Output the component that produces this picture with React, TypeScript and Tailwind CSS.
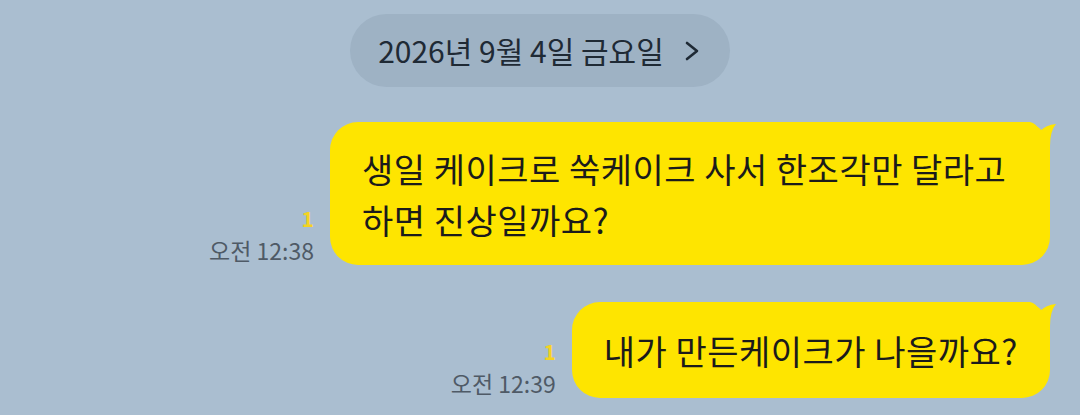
import React from "react"

const FONT = { fontFamily: '"Noto Sans CJK KR", "Noto Sans", sans-serif' }

function Tail() {
  return (
    <svg
      className="absolute right-0 top-0"
      width="36"
      height="32"
      viewBox="0 0 36 32"
      aria-hidden
    >
      <path d="M0 0 L8 0 Q14 1 18 9 Q24 3 34 2 Q28 9 28 24 L28 32 L0 32 Z" fill="#fee500" />
    </svg>
  )
}

interface MessageProps {
  text: string
  time: string
  bubbleClass: string
}

function Message({ text, time, bubbleClass }: MessageProps) {
  return (
    <div className="flex justify-end items-end gap-[16px] pr-[22px]">
      <div className="flex flex-col items-end pb-[1px]">
        <span className="text-[21px] leading-[24px] font-bold text-[#f4d321] mb-[6px]">1</span>
        <span className="text-[23px] leading-[28px] text-[#4f5a66] whitespace-nowrap">{time}</span>
      </div>
      <div className="relative pr-[8px]">
        <div
          className={`bg-[#fee500] rounded-[28px] px-[32px] text-[34px] tracking-[0.5px] leading-[51px] text-[#1b1b1b] break-keep ${bubbleClass}`}
        >
          {text}
        </div>
        <Tail />
      </div>
    </div>
  )
}

export default function App() {
  return (
    <div className="w-[1080px] h-[415px] overflow-hidden bg-[#aabed0] pt-[14px] flex flex-col" style={FONT}>
      <div className="flex justify-center">
        <div className="h-[73px] rounded-full bg-[#9eb2c4] pl-[28px] pr-[30px] flex items-center gap-[20px]">
          <span className="text-[30px] text-[#1f2a35] whitespace-nowrap">2026년 9월 4일 금요일</span>
          <svg width="16" height="20" viewBox="0 0 16 20" aria-hidden>
            <path d="M3 2 L13 10 L3 18" fill="none" stroke="#1f2a35" strokeWidth="2.6" strokeLinecap="round" strokeLinejoin="round" />
          </svg>
        </div>
      </div>
      <div className="mt-[35px]">
        <Message
          text="생일 케이크로 쑥케이크 사서 한조각만 달라고 하면 진상일까요?"
          time="오전 12:38"
          bubbleClass="max-w-[720px] pt-[21px] pb-[20px]"
        />
      </div>
      <div className="mt-[37px]">
        <Message text="내가 만든케이크가 나을까요?" time="오전 12:39" bubbleClass="pt-[23px] pb-[22px]" />
      </div>
    </div>
  )
}
